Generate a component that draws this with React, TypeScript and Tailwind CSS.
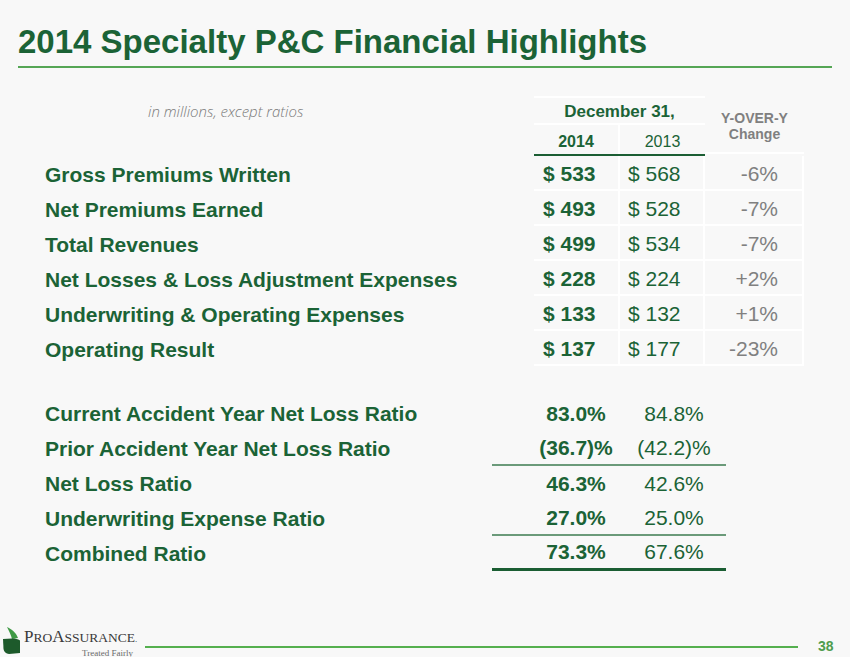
const rows = [
  { label: "Gross Premiums Written", cur: "$ 533", prev: "$ 568", change: "-6%" },
  { label: "Net Premiums Earned", cur: "$ 493", prev: "$ 528", change: "-7%" },
  { label: "Total Revenues", cur: "$ 499", prev: "$ 534", change: "-7%" },
  { label: "Net Losses & Loss Adjustment Expenses", cur: "$ 228", prev: "$ 224", change: "+2%" },
  { label: "Underwriting & Operating Expenses", cur: "$ 133", prev: "$ 132", change: "+1%" },
  { label: "Operating Result", cur: "$ 137", prev: "$ 177", change: "-23%" },
];

const ratios = [
  { label: "Current Accident Year Net Loss Ratio", cur: "83.0%", prev: "84.8%", rule: "" },
  { label: "Prior Accident Year Net Loss Ratio", cur: "(36.7)%", prev: "(42.2)%", rule: "border-b-2 border-[#6b9a7a]" },
  { label: "Net Loss Ratio", cur: "46.3%", prev: "42.6%", rule: "" },
  { label: "Underwriting Expense Ratio", cur: "27.0%", prev: "25.0%", rule: "border-b-2 border-[#6b9a7a]" },
  { label: "Combined Ratio", cur: "73.3%", prev: "67.6%", rule: "border-b-[3px] border-[#1b5e33]" },
];

function Logo() {
  return (
    <svg width="19" height="29" viewBox="0 0 19 29" className="mt-[3px] ml-[2px] shrink-0">
      <path d="M5 1 C9 3, 14 6, 16 12 L10 13 C9 9, 7 5, 5 1 Z" fill="#3f9a45" />
      <path d="M1 13 L10 12.5 C13 12.5, 16 13, 18 14.5 L18 27 L7 28 C4 27.5, 2 26, 1.5 23 Z" fill="#1d5a2b" />
    </svg>
  );
}

export default function App() {
  return (
    <div className="w-[850px] h-[657px] bg-[#f8f8f8] flex flex-col [font-family:'Liberation_Sans',Arial,sans-serif] text-[#1b6336] overflow-hidden">
      <h1 className="mt-[25px] pl-[18px] text-[33px] leading-[33px] font-bold">
        2014 Specialty P&amp;C Financial Highlights
      </h1>
      <div className="mt-[8px] ml-[18px] w-[814px] h-[2px] bg-[#55a655]" />

      {/* header */}
      <div className="mt-[28px] flex">
        <div className="w-[534px] h-[29px] flex items-center pl-[148px] pt-[2px]">
          <span className="[font-family:'Open_Sans',sans-serif] italic font-light text-[15px] text-[#7a7a7a]">
            in millions, except ratios
          </span>
        </div>
        <div className="w-[171px] flex flex-col">
          <div className="h-[29px] border-t-2 border-b-2 border-white flex items-center justify-center pt-[3px] text-[17px] font-bold">
            December 31,
          </div>
          <div className="h-[31px] flex border-b-2 border-[#1b5e33] text-[16px]">
            <div className="w-[86px] border-r-2 border-white flex items-center justify-center pt-[5px] font-bold">
              2014
            </div>
            <div className="flex-1 flex items-center justify-center pt-[5px]">2013</div>
          </div>
        </div>
        <div className="w-[99px] h-[58px] border-b-2 border-white flex flex-col items-center justify-center pt-[3px] text-[14px] leading-[16px] font-bold text-[#808080]">
          <span>Y-OVER-Y</span>
          <span>Change</span>
        </div>
      </div>

      {/* values */}
      <div className="flex flex-col">
        {rows.map((r) => (
          <div key={r.label} className="flex h-[35px] text-[21px]">
            <div className="w-[534px] pl-[45px] pt-[3px] flex items-center font-bold">{r.label}</div>
            <div className="w-[86px] border-r-2 border-b-2 border-white pl-[9px] pt-[3px] flex items-center font-bold">
              {r.cur}
            </div>
            <div className="w-[85px] border-r-2 border-b-2 border-white pl-[8px] pt-[3px] flex items-center">
              {r.prev}
            </div>
            <div className="w-[99px] border-r-2 border-b-2 border-white pr-[24px] pt-[3px] flex items-center justify-end text-[#808080]">
              {r.change}
            </div>
          </div>
        ))}
      </div>

      {/* ratios */}
      <div className="mt-[30px] flex flex-col">
        {ratios.map((r) => (
          <div key={r.label} className="flex h-[35px] text-[21px]">
            <div className="w-[492px] pl-[45px] flex items-center font-bold">{r.label}</div>
            <div className={`w-[234px] flex items-center ${r.rule}`}>
              <span className="ml-[44px] w-[80px] text-center font-bold">{r.cur}</span>
              <span className="ml-[18px] w-[80px] text-center">{r.prev}</span>
            </div>
          </div>
        ))}
      </div>

      {/* footer */}
      <div className="mt-auto h-[34px] flex items-start">
        <Logo />
        <div className="ml-[3px] w-[118px] flex flex-col items-end">
          <div className="self-start mt-[5px] [font-family:'Liberation_Serif','Times_New_Roman',serif] text-[17px] leading-[17px] text-[#3a3a3a] whitespace-nowrap">
            P<span className="text-[13.5px]">RO</span>A<span className="text-[13.5px]">SSURANCE</span>
            <span className="text-[9px]">.</span>
          </div>
          <div className="mr-[9px] [font-family:'Liberation_Serif','Times_New_Roman',serif] text-[9px] leading-[10px] text-[#6a6a6a]">
            Treated Fairly
          </div>
        </div>
        <div className="ml-[3px] mt-[23px] w-[653px] h-[2px] bg-[#55b04f]" />
        <div className="ml-[20px] mt-[16px] text-[14px] leading-[14px] font-bold text-[#4f9d4f]">38</div>
      </div>
    </div>
  );
}
